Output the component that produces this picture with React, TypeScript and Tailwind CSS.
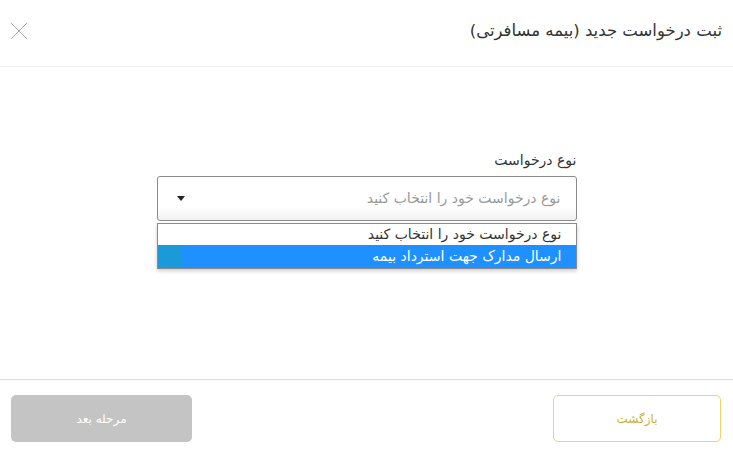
import React from 'react';

const App: React.FC = () => {
    return (
        <div dir="rtl" className="w-[733px] h-[451px] bg-white flex flex-col font-['DejaVu_Sans',sans-serif] text-[#333]">
            {/* Header */}
            <div className="h-[67px] border-b border-[#eeeeee] flex items-center justify-between pr-[11px] pl-[10px]">
                <h1 className="text-[16.5px] text-[#333] mt-[-4px]">ثبت درخواست جدید (بیمه مسافرتی)</h1>
                <button className="w-[18px] h-[18px] text-[#aaa] mt-[-4px]">
                    <svg viewBox="0 0 18 18" className="w-[18px] h-[18px]" fill="none" stroke="currentColor" strokeWidth="1">
                        <path d="M1 1 L17 17 M17 1 L1 17" />
                    </svg>
                </button>
            </div>

            {/* Body */}
            <div className="flex-1 flex justify-center pt-[85px] border-b border-[#d9d9d9]">
                <div className="w-[420px] flex flex-col">
                    <label className="text-[14px] text-[#333] mb-[8px] leading-[16px]">نوع درخواست</label>
                    <div className="h-[45px] border border-[#8a8a8a] rounded-[3px] bg-gradient-to-b from-white from-70% to-[#f1f1f1] flex items-center justify-between pr-[15px] pl-[19px]">
                        <span className="text-[14px] text-[#999]">نوع درخواست خود را انتخاب کنید</span>
                        <svg viewBox="0 0 8 5" className="w-[8px] h-[5px]">
                            <path d="M0 0 L8 0 L4 5 Z" fill="#222" />
                        </svg>
                    </div>
                    <div className="mt-[2px] border border-[#8a8a8a] bg-white shadow-[0_2px_4px_rgba(0,0,0,0.2)]">
                        <div className="h-[21px] flex items-center pr-[14px] text-[14px] text-[#333]">نوع درخواست خود را انتخاب کنید</div>
                        <div className="h-[23px] flex items-center justify-between bg-[#1e90ff] text-white text-[14px] pr-[14px]">
                            <span>ارسال مدارک جهت استرداد بیمه</span>
                            <span className="w-[23px] h-[23px] bg-[#1a9ad9]" />
                        </div>
                    </div>
                </div>
            </div>

            {/* Footer */}
            <div className="h-[71px] flex items-start justify-between pt-[15px] pr-[12px] pl-[11px]">
                <button className="w-[168px] h-[47px] border border-[#ecd56a] rounded-[5px] bg-white text-[12px] text-[#c9b23a]">
                    بازگشت
                </button>
                <button className="w-[181px] h-[47px] rounded-[5px] bg-[#c4c4c4] text-[12px] text-white">
                    مرحله بعد
                </button>
            </div>
        </div>
    );
};

export default App;
